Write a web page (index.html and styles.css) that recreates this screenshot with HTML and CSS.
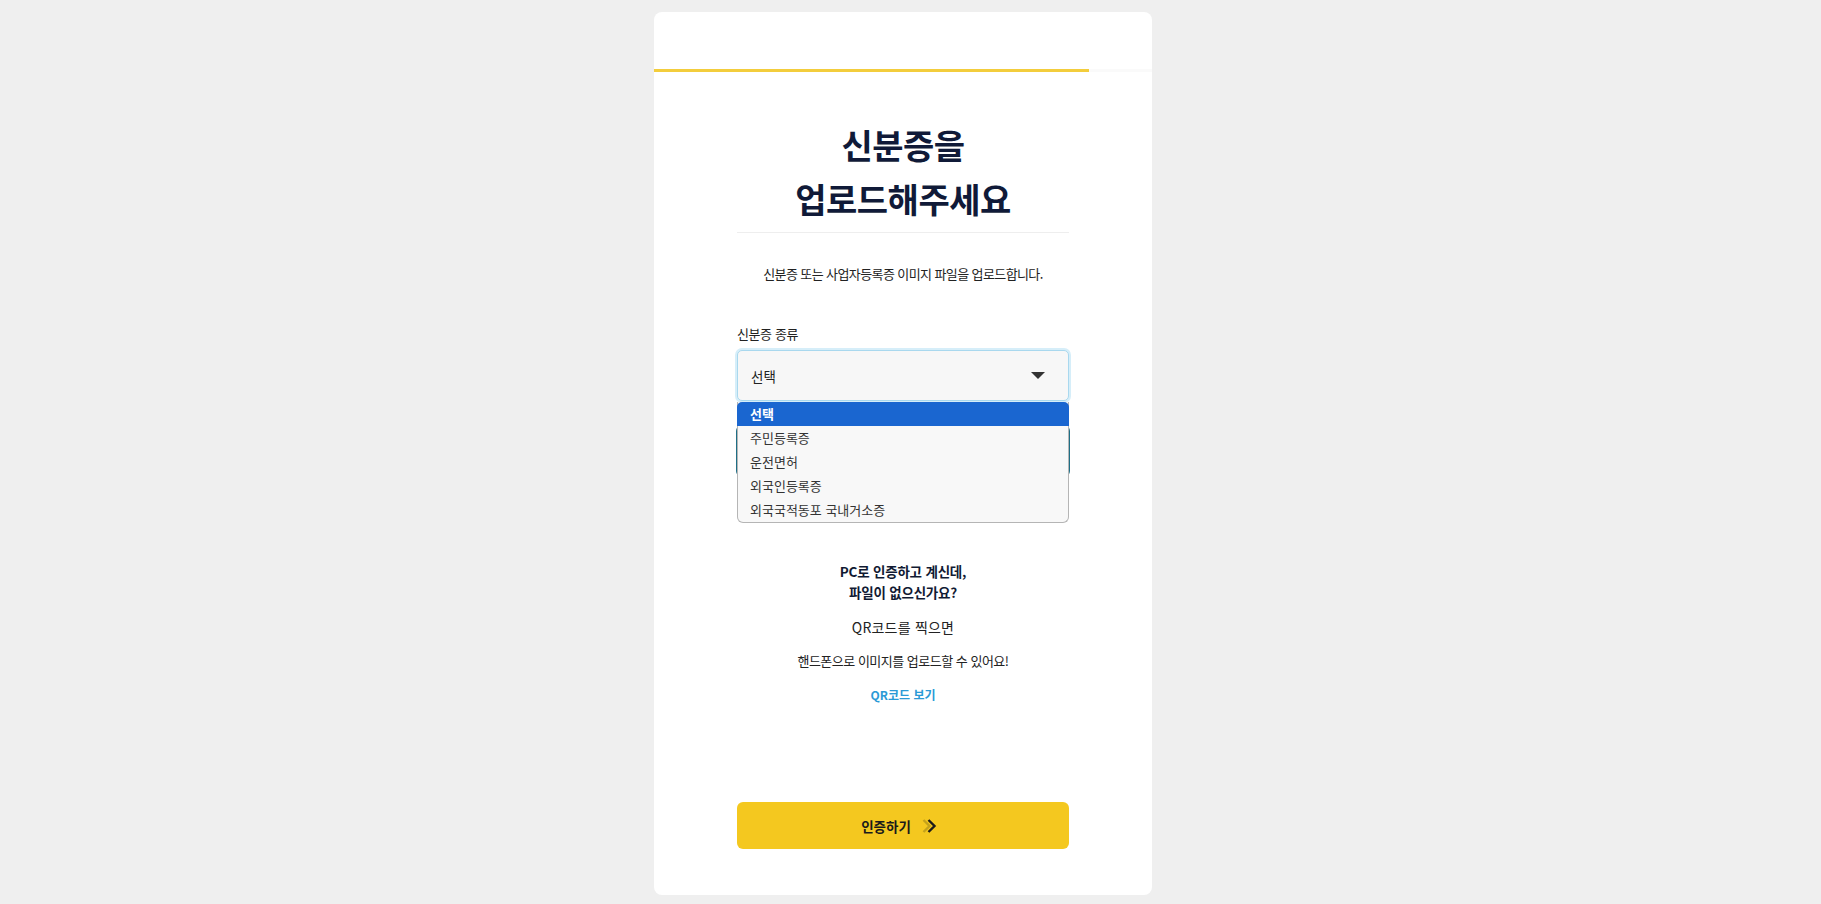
FILE: index.html
```html
<!DOCTYPE html>
<html lang="ko">
    <head>
        <meta charset="utf-8">
        <link rel="stylesheet" href="styles.css">
    </head>
    <body>
        <div class="page">
            <div class="card">
                <div class="progress"><div class="progress-fill"></div></div>
                <div class="content">
                    <h1 class="title">신분증을<br>업로드해주세요</h1>
                    <p class="desc">신분증 또는 사업자등록증 이미지 파일을 업로드합니다.</p>

                    <label class="label">신분증 종류</label>
                    <div class="select-wrap">
                        <div class="select">
                            <span>선택</span>
                            <span class="arrow"></span>
                        </div>
                        <ul class="options">
                            <li class="active">선택</li>
                            <li>주민등록증</li>
                            <li>운전면허</li>
                            <li>외국인등록증</li>
                            <li>외국국적동포 국내거소증</li>
                        </ul>
                    </div>
                    <div class="upload"></div>

                    <div class="qr-info">
                        <p class="qr-head">PC로 인증하고 계신데,<br>파일이 없으신가요?</p>
                        <p class="qr-text">QR코드를 찍으면</p>
                        <p class="qr-small">핸드폰으로 이미지를 업로드할 수 있어요!</p>
                        <a class="qr-link" href="#">QR코드 보기</a>
                    </div>
                </div>
                <button class="submit">
                    인증하기
                    <svg width="16" height="16" viewBox="0 0 16 16">
                        <path d="M2.5 2 L8.5 8 L2.5 14" fill="none" stroke="#c4a21c" stroke-width="2.4"/>
                        <path d="M7.5 2 L13.5 8 L7.5 14" fill="none" stroke="#1b1b1b" stroke-width="2.4"/>
                    </svg>
                </button>
            </div>
        </div>
    </body>
</html>
```

FILE: styles.css
```css
body {
    margin: 0;
    background-color: #efefef;
    font-family: "Noto Sans CJK KR", "Noto Sans", sans-serif;
    color: #1d1d1f;
}
.page {
    display: flex;
    justify-content: center;
    padding: 12px 15px 0 0;
}
.card {
    width: 498px;
    height: 883px;
    background-color: #fff;
    border-radius: 8px;
    display: flex;
    flex-direction: column;
    box-sizing: border-box;
    padding-bottom: 46px;
}
.progress {
    margin-top: 57px;
    height: 3px;
    background-color: #fafafa;
}
.progress-fill {
    width: 435px;
    height: 100%;
    background-color: #f3cd3c;
}
.content {
    width: 332px;
    margin: 0 auto;
    text-align: center;
}
.title {
    margin: 46px 0 0;
    padding-bottom: 6px;
    border-bottom: 1px solid #eeeeee;
    font-size: 34px;
    line-height: 54px;
    letter-spacing: -0.5px;
    font-weight: 700;
    color: #101a38;
}
.desc {
    margin: 32px 0 0;
    font-size: 13px;
    line-height: 18px;
    letter-spacing: -0.6px;
    color: #222;
}
.label {
    display: block;
    margin-top: 42px;
    text-align: left;
    font-size: 13px;
    line-height: 18px;
    letter-spacing: -0.4px;
    color: #222;
}
.select-wrap {
    position: relative;
    margin-top: 7px;
}
.select {
    height: 51px;
    box-sizing: border-box;
    border: 1px solid #a9d8ee;
    box-shadow: 0 0 0 2px #d6eef9;
    border-radius: 5px;
    background-color: #f7f7f7;
    display: flex;
    align-items: center;
    justify-content: space-between;
    padding: 0 23px 0 13px;
    font-size: 13.5px;
    color: #222;
}
.arrow {
    width: 0;
    height: 0;
    border-left: 7.5px solid transparent;
    border-right: 7.5px solid transparent;
    border-top: 7px solid #333;
}
.options {
    position: absolute;
    top: 52px;
    left: 0;
    right: 0;
    margin: 0;
    padding: 0;
    list-style: none;
    background-color: #f8f8f8;
    border: 1px solid #b5b5b5;
    border-top: none;
    border-radius: 0 0 6px 6px;
    text-align: left;
    z-index: 2;
}
.options li {
    height: 24px;
    line-height: 24px;
    padding-left: 12px;
    font-size: 13px;
    color: #333;
}
.options li.active {
    background-color: #1a66d0;
    color: #fff;
    font-weight: 700;
    border-radius: 5px 5px 0 0;
    margin: 0 -1px;
    padding-left: 13px;
}
.upload {
    margin: 24px -1px 0;
    height: 50px;
    border: 1px solid #1f6f86;
    border-radius: 6px;
}
.qr-info {
    margin-top: 84px;
}
.qr-head {
    margin: 0;
    font-size: 13.5px;
    line-height: 21px;
    font-weight: 700;
    letter-spacing: -0.2px;
    color: #111a33;
}
.qr-text {
    margin: 14px 0 0;
    font-size: 14px;
    line-height: 20px;
    letter-spacing: 0.2px;
    color: #222;
}
.qr-small {
    margin: 14px 0 0;
    font-size: 13px;
    line-height: 20px;
    letter-spacing: -0.5px;
    color: #222;
}
.qr-link {
    display: inline-block;
    margin-top: 14px;
    font-size: 12px;
    line-height: 20px;
    font-weight: 700;
    color: #2b9ad6;
    text-decoration: none;
}
.submit {
    margin: auto auto 0;
    width: 332px;
    height: 47px;
    border: none;
    border-radius: 6px;
    background-color: #f4c81f;
    display: flex;
    align-items: center;
    justify-content: center;
    gap: 10px;
    font-family: inherit;
    font-size: 13.5px;
    font-weight: 700;
    color: #1b1b1b;
    padding: 0 8px 0 0;
    cursor: pointer;
}
```
